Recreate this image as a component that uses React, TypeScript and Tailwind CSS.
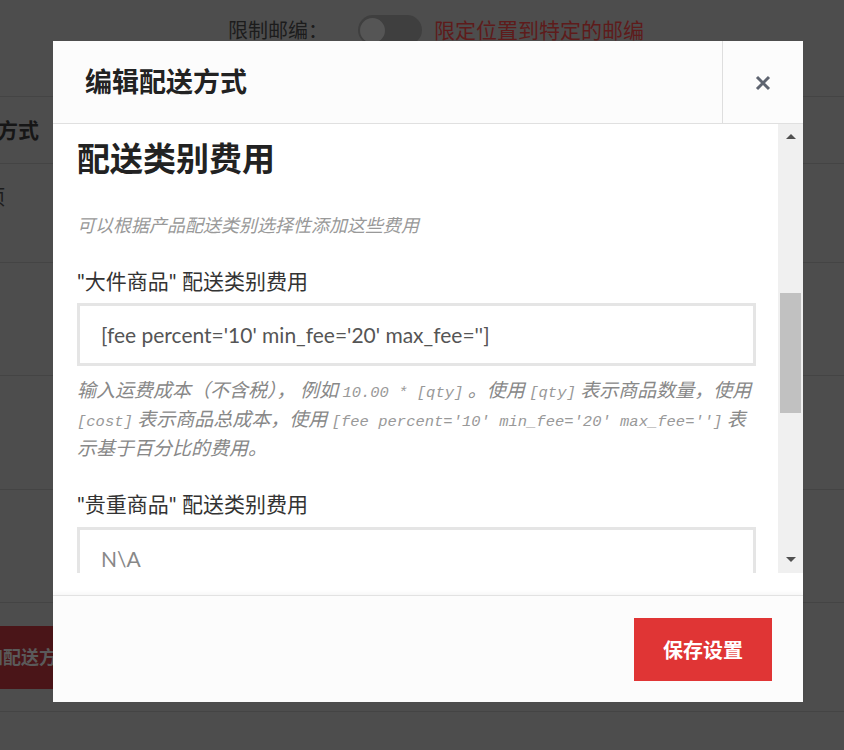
const FONT = "font-[Lato,'Noto_Sans_CJK_SC',sans-serif]";
const CODE = "font-['Liberation_Mono',monospace] text-[15.5px] leading-none text-[#999]";

const BackgroundPage = () => (
  <div className="flex flex-col">
    {/* Zip code restriction row */}
    <div className="flex h-[97px] items-start border-b border-[#444] pt-[15px]">
      <span className="ml-[228px] text-[20px] leading-[30px] text-[#1c1c1c]">限制邮编：</span>
      <div className="ml-[30px] flex h-[30px] w-[64px] items-center rounded-full bg-[#3f3f3f] px-[2px]">
        <div className="h-[25px] w-[25px] rounded-full bg-[#555]" />
      </div>
      <span className="ml-[12px] text-[21px] leading-[30px] text-[#5e1b1b]">限定位置到特定的邮编</span>
    </div>
    <div className="flex h-[67px] items-center border-b border-[#444]">
      <span className="ml-[-3px] text-[21px] font-bold text-[#161616]">方式</span>
    </div>
    <div className="h-[99px] border-b border-[#444] pt-[18px]">
      <span className="ml-[-15px] text-[20px] text-[#1c1c1c]">项</span>
    </div>
    <div className="h-[113px] border-b border-[#444]" />
    <div className="h-[114px] border-b border-[#444]" />
    <div className="h-[113px] border-b border-[#444]" />
    <div className="flex h-[109px] items-start border-b border-[#444] pt-[23px]">
      <div className="ml-[-60px] flex h-[63px] w-[240px] items-center bg-[#4a1518] pl-[45px]">
        <span className="text-[18px] font-bold text-[#5a5a5a]">加配送方式</span>
      </div>
    </div>
  </div>
);

const Scrollbar = () => (
  <div className="flex w-[25px] shrink-0 flex-col items-center bg-[#f0f0f0]">
    <div className="mt-[10px] h-0 w-0 border-x-[5px] border-b-[5px] border-x-transparent border-b-[#505050]" />
    <div className="mt-[154px] h-[120px] w-[21px] bg-[#c1c1c1]" />
    <div className="mt-[144px] h-0 w-0 border-x-[5px] border-t-[5px] border-x-transparent border-t-[#505050]" />
  </div>
);

const ShippingModal = () => (
  <div className="absolute left-[53px] top-[41px] flex h-[661px] w-[750px] flex-col bg-white">
    {/* Header */}
    <div className="flex h-[83px] shrink-0 border-b border-[#e0e0e0] bg-[#fcfcfc]">
      <h2 className="flex flex-1 items-center pl-[32px] pt-[1px] text-[27px] font-bold text-[#222]">编辑配送方式</h2>
      <button className="flex w-[81px] items-center justify-center border-l border-[#dedede]">
        <svg width="16" height="16" viewBox="0 0 16 16" className="mt-[1px]">
          <path d="M2 2 L14 14 M14 2 L2 14" stroke="#5e6470" strokeWidth="3" />
        </svg>
      </button>
    </div>

    {/* Body */}
    <div className="flex h-[449px] shrink-0">
      <div className="flex-1 overflow-hidden pl-[24px] pr-[22px]">
        <h3 className="mt-[15px] text-[33px] font-bold leading-[38px] text-[#222]">配送类别费用</h3>
        <p className="mt-[34px] text-[18px] italic leading-[28px] text-[#999]">可以根据产品配送类别选择性添加这些费用</p>

        <label className="mt-[28px] block text-[21px] leading-[28px] text-[#333]">"大件商品" 配送类别费用</label>
        <div className="mt-[8px] flex h-[63px] items-center border-[3px] border-[#e5e5e5] pl-[21px] text-[21px] text-[#555]">
          [fee percent='10' min_fee='20' max_fee='']
        </div>
        <p className="mt-[9px] whitespace-nowrap text-[19px] italic leading-[29px] text-[#888]">
          输入运费成本（不含税）， 例如 <code className={CODE}>10.00 * [qty]</code> 。使用 <code className={CODE}>[qty]</code> 表示商品数量，使用
          <br />
          <code className={CODE}> [cost]</code> 表示商品总成本，使用 <code className={CODE}>[fee percent='10' min_fee='20' max_fee='']</code> 表
          <br />
          示基于百分比的费用。
        </p>

        <label className="mt-[28px] block text-[21px] leading-[28px] text-[#333]">"贵重商品" 配送类别费用</label>
        <div className="mt-[9px] flex h-[63px] items-center border-[3px] border-[#e5e5e5] pl-[21px] text-[21px] text-[#888]">
          N\A
        </div>
      </div>
      <Scrollbar />
    </div>
    <div className="h-[22px] shrink-0" />

    {/* Footer */}
    <div className="flex flex-1 items-start justify-end border-t border-[#e2e2e2] bg-[#fcfcfc] pr-[31px] pt-[22px] shadow-[0_-2px_4px_rgba(0,0,0,0.04)]">
      <button className="h-[63px] w-[138px] bg-[#e03535] text-[20px] font-bold text-white">保存设置</button>
    </div>
  </div>
);

export default function App() {
  return (
    <div className={`relative h-[750px] w-[844px] overflow-hidden bg-[#4d4d4d] ${FONT}`}>
      <BackgroundPage />
      <ShippingModal />
    </div>
  );
}
